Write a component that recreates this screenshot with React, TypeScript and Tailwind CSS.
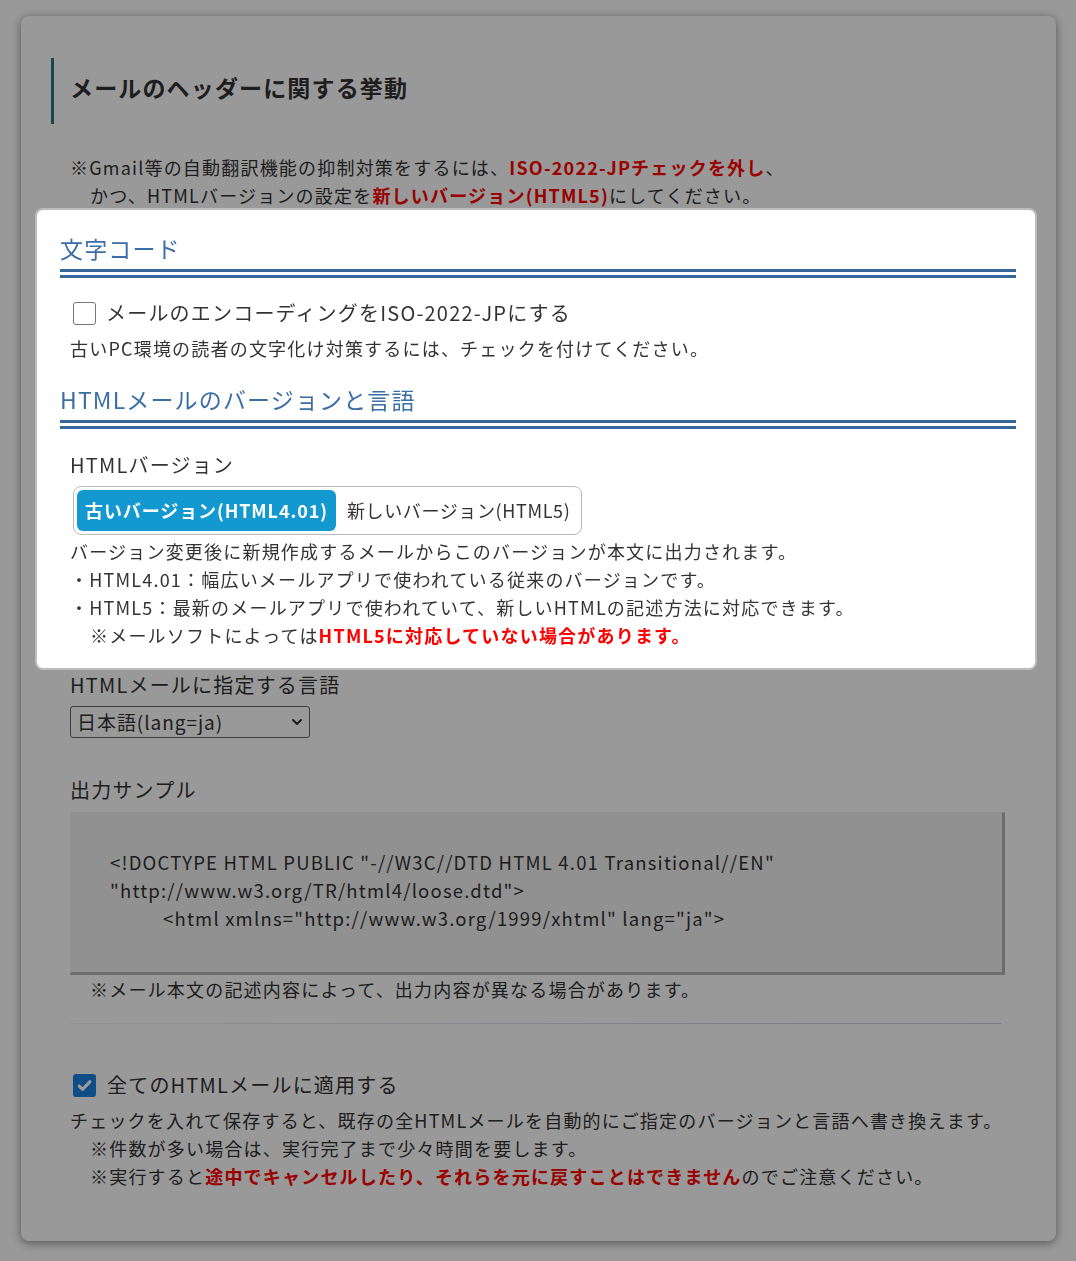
import { ChevronDown } from "lucide-react";

// spotlight tour step: the encoding / html version block is lifted above the dim overlay
export default function App() {
    return (
        <div className="min-h-screen bg-white pt-[16px] pb-[20px] pl-[21px] pr-[20px] font-['Noto_Sans_CJK_JP',sans-serif] text-[#333] tracking-[0.075em]">
            <div className="relative rounded-lg bg-white pt-[42px] pb-[51px] shadow-[0_2px_10px_rgba(0,0,0,0.45)]">
                {/* Section title */}
                <div className="ml-[30px] flex h-[66px] items-center border-l-[3px] border-[#2e7384] pl-[16px] pb-[8px]">
                    <h2 className="text-[23px] font-bold leading-none tracking-[0.05em]">
                        メールのヘッダーに関する挙動
                    </h2>
                </div>

                {/* Note */}
                <div className="mt-[29px] pl-[49px] text-[18px] leading-[28px]">
                    <p>
                        ※Gmail等の自動翻訳機能の抑制対策をするには、
                        <span className="font-bold text-[#ff0000]">ISO-2022-JPチェックを外し</span>、
                    </p>
                    <p className="pl-[20px]">
                        かつ、HTMLバージョンの設定を
                        <span className="font-bold text-[#ff0000]">新しいバージョン(HTML5)</span>
                        にしてください。
                    </p>
                </div>

                {/* Highlighted block */}
                <div className="relative z-20 mt-px ml-[16px] mr-[21px] rounded-md bg-white pt-[21px] pb-[19px] shadow-[0_0_0_2px_rgba(255,255,255,0.35)]">
                    <div className="ml-[23px] mr-[19px] border-b-[9px] border-double border-[#35679a] pb-[4px]">
                        <h3 className="text-[23px] leading-[34px] tracking-[0.05em] text-[#3b6ea5]">文字コード</h3>
                    </div>

                    <label className="mt-[20px] ml-[36px] flex h-[30px] items-center gap-[10px] text-[20px]">
                        <span className="h-[23px] w-[23px] rounded-[3px] border-[1.5px] border-[#777] bg-white" />
                        <span>メールのエンコーディングをISO-2022-JPにする</span>
                    </label>
                    <p className="mt-[6px] pl-[33px] text-[18px] leading-[28px]">
                        古いPC環境の読者の文字化け対策するには、チェックを付けてください。
                    </p>

                    <div className="mt-[20px] ml-[23px] mr-[19px] border-b-[9px] border-double border-[#35679a] pb-[4px]">
                        <h3 className="text-[23px] leading-[34px] tracking-[0.05em] text-[#3b6ea5]">
                            HTMLメールのバージョンと言語
                        </h3>
                    </div>

                    <p className="mt-[21px] pl-[33px] text-[20px] leading-[30px]">HTMLバージョン</p>
                    <div className="mt-[6px] ml-[36px] inline-flex items-center rounded-lg border border-[#bbb] p-[3px]">
                        <button className="h-[41px] rounded-md bg-[#1399cf] px-[8px] text-[18px] font-bold tracking-[0.05em] text-white">
                            古いバージョン(HTML4.01)
                        </button>
                        <button className="h-[41px] pl-[11px] pr-[8px] text-[18px] tracking-[0.035em]">
                            新しいバージョン(HTML5)
                        </button>
                    </div>
                    <div className="mt-[2px] pl-[33px] text-[18px] leading-[28px]">
                        <p>バージョン変更後に新規作成するメールからこのバージョンが本文に出力されます。</p>
                        <p>・HTML4.01：幅広いメールアプリで使われている従来のバージョンです。</p>
                        <p>・HTML5：最新のメールアプリで使われていて、新しいHTMLの記述方法に対応できます。</p>
                        <p className="pl-[20px]">
                            ※メールソフトによっては
                            <span className="font-bold text-[#ff0000]">HTML5に対応していない場合があります。</span>
                        </p>
                    </div>
                </div>

                {/* Language */}
                <div className="pl-[49px] pr-[51px]">
                    <p className="mt-[2px] text-[20px] leading-[30px]">HTMLメールに指定する言語</p>
                    <div className="relative mt-[6px] w-[240px]">
                        <select
                            defaultValue="ja"
                            className="h-[32px] w-full appearance-none rounded-[3px] border border-[#666] bg-white pl-[6px] text-[19px] tracking-[0.05em] text-[#333]"
                        >
                            <option value="ja">日本語(lang=ja)</option>
                            <option value="en">English(lang=en)</option>
                        </select>
                        <ChevronDown
                            className="pointer-events-none absolute right-[5px] top-[8px] h-[16px] w-[16px]"
                            strokeWidth={3}
                        />
                    </div>

                    <p className="mt-[37px] text-[20px] leading-[30px]">出力サンプル</p>
                    <div className="mt-[7px] border-t border-l border-r-[3px] border-b-[3px] border-t-[#f4f4f4] border-l-[#f4f4f4] border-r-[#b5b5b5] border-b-[#b5b5b5] bg-[#f2f2f2] pt-[35px] pb-[40px] pl-[39px] text-[18.5px] leading-[28px]">
                        <p>&lt;!DOCTYPE HTML PUBLIC "-//W3C//DTD HTML 4.01 Transitional//EN"</p>
                        <p>"http://www.w3.org/TR/html4/loose.dtd"&gt;</p>
                        <p className="pl-[53px]">&lt;html xmlns="http://www.w3.org/1999/xhtml" lang="ja"&gt;</p>
                    </div>
                    <p className="pl-[20px] text-[18px] leading-[28px]">
                        ※メール本文の記述内容によって、出力内容が異なる場合があります。
                    </p>

                    <div className="mt-[20px] mr-[4px] h-px bg-gradient-to-r from-[#f2f3f7] to-[#c6cbe2]" />

                    {/* Apply to all */}
                    <label className="mt-[46px] ml-[3px] flex h-[30px] items-center gap-[11px] text-[20px]">
                        <span className="flex h-[23px] w-[23px] items-center justify-center rounded-[3px] bg-[#1a80e0]">
                            <svg viewBox="0 0 16 16" className="h-[17px] w-[17px]" fill="none">
                                <path
                                    d="M3 8.5l3.2 3.2L13 4.5"
                                    stroke="white"
                                    strokeWidth="3"
                                    strokeLinecap="round"
                                    strokeLinejoin="round"
                                />
                            </svg>
                        </span>
                        <span>全てのHTMLメールに適用する</span>
                    </label>
                    <div className="mt-[6px] text-[18px] leading-[28px]">
                        <p>チェックを入れて保存すると、既存の全HTMLメールを自動的にご指定のバージョンと言語へ書き換えます。</p>
                        <p className="pl-[20px]">※件数が多い場合は、実行完了まで少々時間を要します。</p>
                        <p className="pl-[20px]">
                            ※実行すると
                            <span className="font-bold text-[#ff0000]">
                                途中でキャンセルしたり、それらを元に戻すことはできません
                            </span>
                            のでご注意ください。
                        </p>
                    </div>
                </div>
            </div>

            {/* dim overlay */}
            <div className="fixed inset-0 z-10 bg-black/40" />
        </div>
    );
}
